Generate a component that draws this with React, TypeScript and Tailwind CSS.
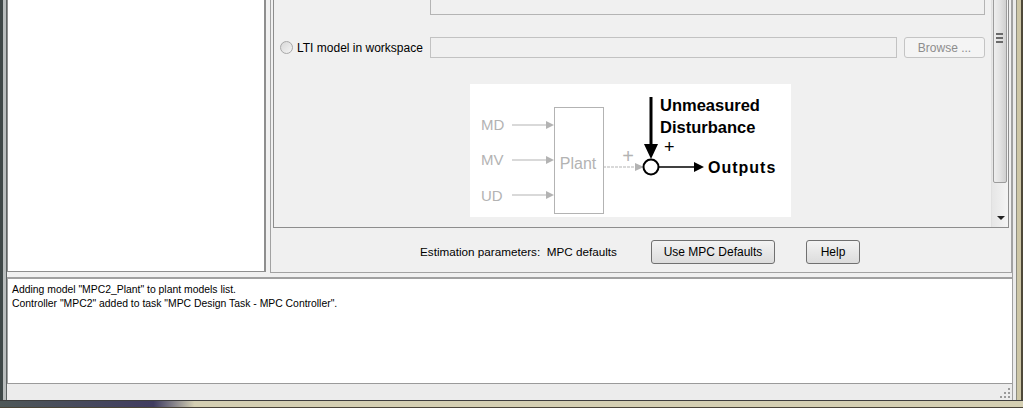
import React from 'react'

const ui = { fontFamily: '"Liberation Sans", Arial, sans-serif' }

function Diagram() {
    const gray = '#b3b3b3'
    return (
        <svg width="321" height="133" viewBox="0 0 321 133" className="block">
            <rect width="321" height="133" fill="#ffffff" />
            <g fill={gray} fontFamily='"Liberation Sans", Arial, sans-serif' fontSize="15">
                <text x="11" y="46">MD</text>
                <text x="11" y="81">MV</text>
                <text x="11" y="117">UD</text>
                <text x="108" y="85" textAnchor="middle" fontSize="16">Plant</text>
                <text x="158" y="79" textAnchor="middle" fontSize="20">+</text>
            </g>
            <g stroke={gray} strokeWidth="1">
                <line x1="42" y1="41" x2="78" y2="41" />
                <line x1="42" y1="76" x2="78" y2="76" />
                <line x1="42" y1="111" x2="78" y2="111" />
                <line x1="133" y1="83" x2="166" y2="83" strokeDasharray="3 1" />
                <rect x="84.5" y="23.5" width="49" height="106" fill="none" />
            </g>
            <g fill={gray}>
                <polygon points="76,37 84,41 76,45" />
                <polygon points="76,72 84,76 76,80" />
                <polygon points="76,107 84,111 76,115" />
                <polygon points="165,79 174,83 165,87" />
            </g>
            <line x1="181" y1="13" x2="181" y2="62" stroke="#000" strokeWidth="3" />
            <polygon points="174,60 188,60 181,75" fill="#000" />
            <circle cx="181" cy="83" r="7.5" fill="#fff" stroke="#000" strokeWidth="2" />
            <line x1="189" y1="83" x2="226" y2="83" stroke="#000" strokeWidth="1.5" />
            <polygon points="224,78 234,83 224,88" fill="#000" />
            <g fill="#000" fontFamily='"Liberation Sans", Arial, sans-serif' fontWeight="bold" fontSize="16.5">
                <text x="190" y="27">Unmeasured</text>
                <text x="190" y="49">Disturbance</text>
                <text x="194" y="69" fontWeight="normal" fontSize="18">+</text>
                <text x="238" y="89" fontSize="16" letterSpacing="1">Outputs</text>
            </g>
        </svg>
    )
}

export default function App() {
    return (
        <div className="w-[1023px] h-[408px] flex flex-col bg-[#d3cfb2] overflow-hidden" style={ui}>
            <div className="flex flex-1 min-h-0">
                {/* left window frame */}
                <div className="w-[7px] flex">
                    <div className="w-[3px] bg-[#3f4848]" />
                    <div className="w-[3px] bg-[#b9bdbd]" />
                    <div className="w-[1px] bg-[#5c6262]" />
                </div>

                {/* window content */}
                <div className="flex-1 flex flex-col bg-[#f0f0f0]">
                    <div className="h-[273px] flex">
                        <div className="w-[259px] h-[272px] bg-white border-l border-r-2 border-b border-[#8e8e8e]" />
                        <div className="w-[4px]" />
                        <div className="flex-1 h-[273px] flex flex-col border-l border-r border-b border-[#a2a2a2] pl-[2px] pr-[2px]">
                            <div className="h-[228px] flex border-l border-b border-r border-[#8d8d8d] bg-[#f0f0f0]">
                                <div className="flex-1 flex flex-col text-[12px] text-black">
                                    <div className="ml-[156px] mr-[6px] h-[15px] border-x border-b border-[#b4b4b4] bg-[#f0f0f0]" />
                                    <div className="mt-[22px] h-[21px] flex items-center">
                                        <div className="w-[156px] flex items-center pl-[6px]">
                                            <div className="w-[13px] h-[13px] rounded-full border border-[#a8a8a8] bg-gradient-to-br from-[#d8d8d8] to-[#f4f4f4]" />
                                            <span className="ml-[4px]">LTI model in workspace</span>
                                        </div>
                                        <div className="w-[467px] h-[21px] border border-[#c2c2c2] bg-[#f0f0f0]" />
                                        <div className="ml-[7px] w-[81px] h-[21px] rounded-[3px] border border-[#c4c4c4] bg-[#f4f4f4] flex items-center justify-center text-[#8d8d8d]">
                                            Browse ...
                                        </div>
                                    </div>
                                    <div className="mt-[26px] ml-[196px]">
                                        <Diagram />
                                    </div>
                                </div>
                                {/* scrollbar */}
                                <div className="w-[17px] h-full relative bg-gradient-to-r from-[#e6e6e6] to-[#f4f4f4] border-l border-[#e0e0e0]">
                                    <div className="absolute left-[1px] right-[1px] top-[-60px] h-[243px] rounded-[2px] border border-[#9c9c9c] bg-gradient-to-r from-[#eeeeee] via-[#e2e2e2] to-[#d0d0d0]" />
                                    <div className="absolute left-[4px] top-[33px] w-[7px] flex flex-col gap-[2px]">
                                        <div className="h-[2px] bg-[#6a6a6a]" />
                                        <div className="h-[2px] bg-[#6a6a6a]" />
                                        <div className="h-[2px] bg-[#6a6a6a]" />
                                    </div>
                                    <div className="absolute left-[5px] top-[216px] w-0 h-0 border-l-[4px] border-r-[4px] border-t-[4px] border-l-transparent border-r-transparent border-t-[#222]" />
                                </div>
                            </div>
                            <div className="flex-1 flex items-start pt-[12px] text-[12px] text-black">
                                <div className="ml-[147px] w-[231px] h-[24px] flex items-center text-[11.7px]">Estimation parameters:&nbsp; MPC defaults</div>
                                <div className="w-[124px] h-[24px] rounded-[3px] border border-[#707070] bg-gradient-to-b from-[#f3f3f3] to-[#dcdcdc] flex items-center justify-center">Use MPC Defaults</div>
                                <div className="ml-[31px] w-[54px] h-[24px] rounded-[3px] border border-[#707070] bg-gradient-to-b from-[#f3f3f3] to-[#dcdcdc] flex items-center justify-center">Help</div>
                            </div>
                        </div>
                    </div>
                    <div className="h-[4px]" />
                    <div className="h-[106px] bg-white border-t-2 border-l border-[#a0a0a0] pl-[4px] pt-[4px] text-[10.4px] leading-[14px] text-black">
                        <div>Adding model "MPC2_Plant" to plant models list.</div>
                        <div>Controller "MPC2" added to task "MPC Design Task - MPC Controller".</div>
                    </div>
                    <div className="h-[17px] border-t border-[#9a9a9a] bg-[#ececec] flex justify-end items-end pb-[1px] pr-[1px]">
                        <svg width="11" height="11" viewBox="0 0 11 11">
                            <g fill="#9a9a9a">
                                <rect x="8" y="0" width="2" height="2" />
                                <rect x="8" y="4" width="2" height="2" />
                                <rect x="4" y="4" width="2" height="2" />
                                <rect x="8" y="8" width="2" height="2" />
                                <rect x="4" y="8" width="2" height="2" />
                                <rect x="0" y="8" width="2" height="2" />
                            </g>
                        </svg>
                    </div>
                </div>

                {/* right window frame */}
                <div className="w-[11px] flex">
                    <div className="w-[1px] bg-[#a0a0a0]" />
                    <div className="w-[3px] bg-[#ebebeb]" />
                    <div className="w-[1px] bg-[#8c8c80]" />
                    <div className="w-[4px] bg-[#cdc6a6]" />
                    <div className="w-[2px] bg-[#4e4838]" />
                </div>
            </div>

            {/* bottom window frame */}
            <div className="h-[8px] flex flex-col">
                <div className="h-[1px] bg-[#3e3e3e]" />
                <div className="flex-1 bg-gradient-to-r from-[#4f5858] via-[#403c60] via-[15%] to-[#d4cfb2] to-[19%]" />
                <div className="h-[1px] bg-[#4a4538]" />
            </div>
        </div>
    )
}
